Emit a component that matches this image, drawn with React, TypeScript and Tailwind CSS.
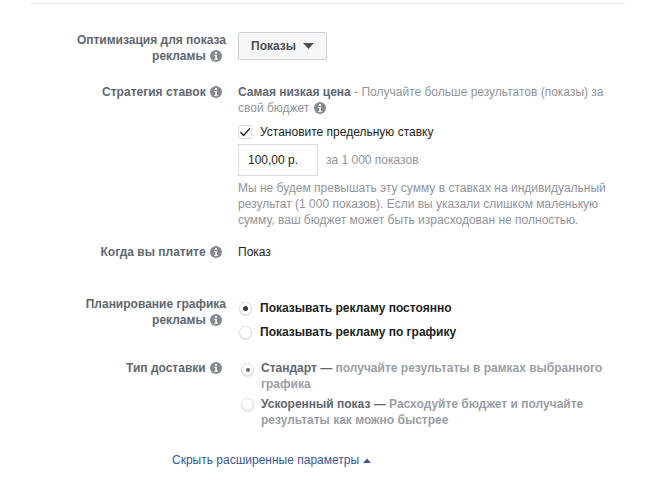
import { ReactNode } from "react";

function InfoIcon() {
  return (
    <svg viewBox="0 0 12 12" className="inline-block w-3 h-3 align-[-2px] ml-[1px] mr-1">
      <circle cx="6" cy="6" r="6" fill="#858a91" />
      <rect x="5" y="2" width="2" height="2" rx="0.5" fill="#fff" />
      <path d="M4.4 5h2.6v4h0.8v1H4.4V9h0.9V6H4.4z" fill="#fff" />
    </svg>
  );
}

function Row({ label, children, className = "" }: { label: ReactNode; children: ReactNode; className?: string }) {
  return (
    <div className={`flex ${className}`}>
      <div className="w-[196px] shrink-0 text-right font-bold text-[#606770]">{label}</div>
      <div className="w-[372px] ml-3">{children}</div>
    </div>
  );
}

function Radio({ checked, disabled }: { checked?: boolean; disabled?: boolean }) {
  return (
    <span className="w-[13px] h-[13px] rounded-full border border-[#dadde1] bg-white shadow-[0_1px_1px_rgba(0,0,0,0.12)] flex items-center justify-center shrink-0">
      {checked && <span className={`rounded-full ${disabled ? "w-1 h-1 bg-[#606770]" : "w-[5px] h-[5px] bg-[#373a40]"}`} />}
    </span>
  );
}

export default function App() {
  return (
    <div className="w-[653px] h-[501px] bg-white text-xs leading-4 text-[#1c1e21]" style={{ fontFamily: '"Liberation Sans", Arial, sans-serif' }}>
      <div className="ml-[30px] w-[595px] pt-[3px]">
        <div className="border-t border-[#e9ebee] pt-7">
          <Row label={<>Оптимизация для показа рекламы <InfoIcon /></>}>
            <button className="h-[28px] w-[89px] border border-[#ccd0d5] bg-[#f5f6f7] rounded-[2px] font-bold text-[#4b4f56] flex items-center justify-center gap-[7px]">
              Показы
              <svg viewBox="0 0 11 6" className="w-[11px] h-[6px]"><path d="M0.8 0h9.4q0.8 0 0.3 0.6L6 5.6q-0.5 0.4-1 0L0.5 0.6Q0 0 0.8 0z" fill="#4b4f56" /></svg>
            </button>
          </Row>

          <Row label={<>Стратегия ставок <InfoIcon /></>} className="mt-5">
            <div className="text-[#90949c]">
              <span className="font-bold text-[#606770]">Самая низкая цена</span> - Получайте больше результатов (показы) за свой бюджет <InfoIcon />
            </div>
            <label className="flex items-center mt-2 h-4">
              <span className="w-[14px] h-[14px] border border-[#dadde1] rounded-[2px] bg-white flex items-center justify-center">
                <svg viewBox="0 0 12 12" className="w-3 h-3"><path d="M1.5 6.2L4.6 9.4L10.8 2.4" fill="none" stroke="#1c1e21" strokeWidth="1.4" /></svg>
              </span>
              <span className="ml-2 text-[#1c1e21]">Установите предельную ставку</span>
            </label>
            <div className="flex items-center mt-1">
              <div className="w-[80px] h-8 border border-[#dadde1] bg-white pl-[9px] flex items-center">100,00 р.</div>
              <span className="ml-2 text-[#90949c]">за 1 000 показов</span>
            </div>
            <p className="mt-1 text-[#90949c]">
              Мы не будем превышать эту сумму в ставках на индивидуальный результат (1 000 показов). Если вы указали слишком маленькую сумму, ваш бюджет может быть израсходован не полностью.
            </p>
          </Row>

          <Row label={<>Когда вы платите <InfoIcon /></>} className="mt-4">
            <div>Показ</div>
          </Row>

          <Row label={<>Планирование графика рекламы <InfoIcon /></>} className="mt-9">
            <div className="flex items-center h-4 mt-1 font-bold">
              <span className="ml-px"><Radio checked /></span>
              <span className="ml-2">Показывать рекламу постоянно</span>
            </div>
            <div className="flex items-center h-4 mt-2 font-bold">
              <span className="ml-px"><Radio /></span>
              <span className="ml-2">Показывать рекламу по графику</span>
            </div>
          </Row>

          <Row label={<>Тип доставки <InfoIcon /></>} className="mt-5">
            <div className="flex font-bold text-[#9a9ea6]">
              <div className="mt-[3px] ml-[3px]"><Radio checked disabled /></div>
              <div className="ml-[7px]"><span className="text-[#606770]">Стандарт —</span> получайте результаты в рамках выбранного графика</div>
            </div>
            <div className="flex font-bold text-[#9a9ea6] mt-1">
              <div className="mt-[2px] ml-[3px]"><Radio disabled /></div>
              <div className="ml-[7px]"><span className="text-[#606770]">Ускоренный показ —</span> Расходуйте бюджет и получайте результаты как можно быстрее</div>
            </div>
          </Row>

          <div className="mt-[24px] ml-[142px] text-[#365899] flex items-center">
            Скрыть расширенные параметры
            <svg viewBox="0 0 8 5" className="w-2 h-[5px] ml-1"><path d="M0 5L4 0.5L8 5z" fill="#365899" /></svg>
          </div>
        </div>
      </div>
    </div>
  );
}
